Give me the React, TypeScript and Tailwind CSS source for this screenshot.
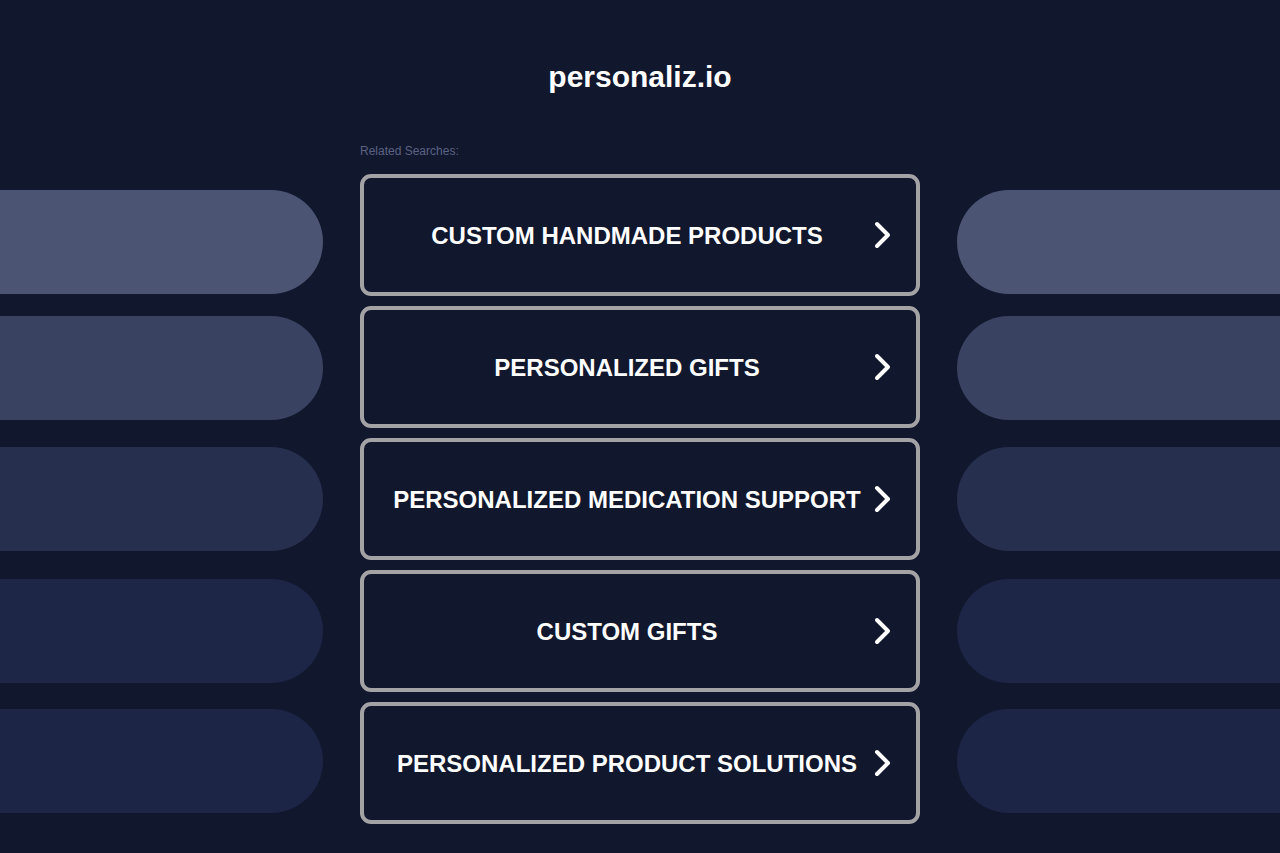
import React from "react";

const items = [
  "CUSTOM HANDMADE PRODUCTS",
  "PERSONALIZED GIFTS",
  "PERSONALIZED MEDICATION SUPPORT",
  "CUSTOM GIFTS",
  "PERSONALIZED PRODUCT SOLUTIONS",
];

const pills = [
  { cls: "bg-[#4b5573] mt-[190px]" },
  { cls: "bg-[#394260] mt-[22px]" },
  { cls: "bg-[#262f4d] mt-[27px]" },
  { cls: "bg-[#1d2647] mt-[28px]" },
  { cls: "bg-[#1c2546] mt-[26px]" },
];

function Chevron() {
  return (
    <svg width="20" height="30" viewBox="0 0 20 30" className="shrink-0">
      <path d="M5 4 L16 15 L5 26" fill="none" stroke="white" strokeWidth="4" strokeLinecap="round" strokeLinejoin="round" />
    </svg>
  );
}

export default function App() {
  return (
    <div
      className="w-[1280px] h-[853px] bg-[#11172d] overflow-hidden flex"
      style={{ fontFamily: '"Liberation Sans", Arial, sans-serif' }}
    >
      <div className="w-[323px] flex flex-col">
        {pills.map((p, i) => (
          <div key={i} className={`h-[104px] rounded-r-[52px] ${p.cls}`} />
        ))}
      </div>
      <div className="w-[634px] flex flex-col items-center">
        <h1 className="mt-[59px] text-[30px] leading-[36px] font-bold text-white">personaliz.io</h1>
        <div className="w-[560px] mt-[49px] text-[12px] leading-[14px] text-[#5c6283]">Related Searches:</div>
        <div className="w-[560px] mt-[16px] flex flex-col gap-[10px]">
          {items.map((t) => (
            <div
              key={t}
              className="h-[122px] border-[4px] border-[#a3a3a6] rounded-[11px] flex items-center pl-[20px] pr-[24px]"
            >
              <span className="flex-1 text-center text-[24px] font-bold text-white leading-[28px] whitespace-nowrap pt-[2px]">{t}</span>
              <div className="ml-[2px]">
                <Chevron />
              </div>
            </div>
          ))}
        </div>
      </div>
      <div className="w-[323px] flex flex-col">
        {pills.map((p, i) => (
          <div key={i} className={`h-[104px] rounded-l-[52px] ${p.cls}`} />
        ))}
      </div>
    </div>
  );
}
